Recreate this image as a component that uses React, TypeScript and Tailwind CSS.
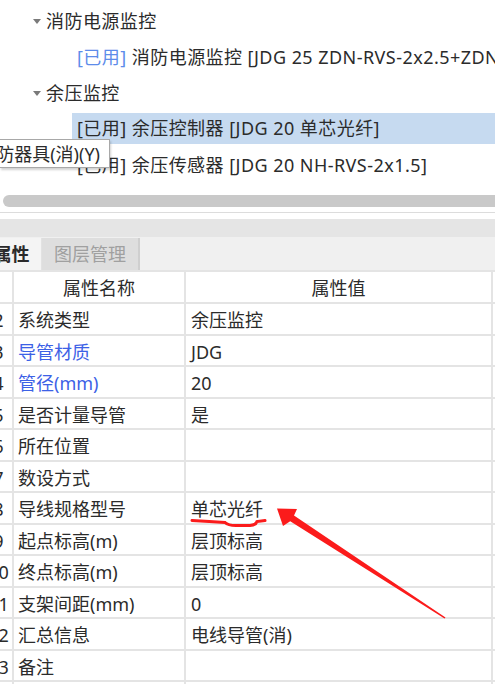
import React from "react";

const font = { fontFamily: '"Noto Sans", "Noto Sans CJK SC", sans-serif' };

type Row = { no: string; name: string; value: string; blue?: boolean };

const rows: Row[] = [
  { no: "2", name: "系统类型", value: "余压监控" },
  { no: "3", name: "导管材质", value: "JDG", blue: true },
  { no: "4", name: "管径(mm)", value: "20", blue: true },
  { no: "5", name: "是否计量导管", value: "是" },
  { no: "6", name: "所在位置", value: "" },
  { no: "7", name: "数设方式", value: "" },
  { no: "8", name: "导线规格型号", value: "单芯光纤" },
  { no: "9", name: "起点标高(m)", value: "层顶标高" },
  { no: "10", name: "终点标高(m)", value: "层顶标高" },
  { no: "11", name: "支架间距(mm)", value: "0" },
  { no: "12", name: "汇总信息", value: "电线导管(消)" },
  { no: "13", name: "备注", value: "" },
  { no: "14", name: "", value: "" },
];

function Caret() {
  return (
    <svg width="8" height="5" viewBox="0 0 8 5" className="shrink-0">
      <path d="M0 0 L8 0 L4 5 Z" fill="#7a7a7a" />
    </svg>
  );
}

export default function App() {
  return (
    <div
      className="relative w-[495px] h-[684px] overflow-hidden bg-white text-[18px] text-[#2b2b2b]"
      style={font}
    >
      {/* Tree */}
      <div className="h-[195px] pt-[3px] whitespace-nowrap leading-none tracking-[0.45px]">
        <div className="h-[36px] flex items-center pl-[33px] gap-[5px]">
          <Caret />
          <span>消防电源监控</span>
        </div>
        <div className="h-[36px] flex items-center pl-[77px]">
          <span className="text-[#5d8cea]">[已用]</span>
          <span>&nbsp;消防电源监控 [JDG 25 ZDN-RVS-2x2.5+ZDN-RVS-2x1.5]</span>
        </div>
        <div className="h-[36px] flex items-center pl-[33px] gap-[5px]">
          <Caret />
          <span>余压监控</span>
        </div>
        <div className="h-[36px] flex items-center">
          <div className="ml-[72px] h-[31px] mt-[-2px] flex-1 flex items-center pl-[5px] bg-[#c6daf0]">
            [已用] 余压控制器 [JDG 20 单芯光纤]
          </div>
        </div>
        <div className="h-[36px] flex items-center pl-[77px]">
          [已用] 余压传感器 [JDG 20 NH-RVS-2x1.5]
        </div>
      </div>

      {/* Horizontal scrollbar */}
      <div className="h-[12px] ml-[3px] w-[520px] rounded-full bg-[#c9c9c9]" />
      <div className="h-[5px]" />
      <div className="h-px bg-[#dcdcdc]" />
      <div className="h-[6px]" />
      <div className="h-[18px] bg-[#e5e5e5]" />

      {/* Tabs */}
      <div className="h-[33px] bg-[#f0f0f0] flex items-end leading-none">
        <div className="ml-[-18px] w-[60px] h-[32px] flex items-center justify-center font-bold text-[#2a2a2a] bg-[#f4f4f4] border-r border-[#e2e2e2]">
          属性
        </div>
        <div className="w-[98px] h-[32px] flex items-center justify-center text-[#a0a0a0] bg-[#dedede] border-r-2 border-[#cfcfcf]">
          图层管理
        </div>
      </div>

      {/* Property table */}
      <div className="ml-[-15px] w-[510px] border-t-2 border-[#e4e4e4] leading-none whitespace-nowrap">
        <div className="h-[32px] flex border-b-2 border-[#e4e4e4]">
          <div className="w-[29px] border-r-2 border-[#e4e4e4]" />
          <div className="w-[172px] border-r-2 border-[#e4e4e4] flex items-center justify-center pt-[2px]">
            属性名称
          </div>
          <div className="w-[307px] border-r-2 border-[#e4e4e4] flex items-center justify-center pt-[2px]">
            属性值
          </div>
        </div>
        {rows.map((r) => (
          <div key={r.no} className="h-[31.5px] flex border-b-2 border-[#e4e4e4]">
            <div className="w-[29px] border-r-2 border-[#e4e4e4] flex items-center justify-center pt-[3px]">
              {r.no}
            </div>
            <div
              className={`w-[172px] border-r-2 border-[#e4e4e4] flex items-center pl-[4px] pt-[3px] ${
                r.blue ? "text-[#3c61e6]" : ""
              }`}
            >
              {r.name}
            </div>
            <div className="w-[307px] border-r-2 border-[#e4e4e4] flex items-center pl-[5px] pt-[3px]">
              {r.value}
            </div>
          </div>
        ))}
      </div>

      {/* Tooltip */}
      <div className="absolute left-0 top-[139px] w-[110px] h-[29px] bg-white border border-l-0 border-[#a8a8a8] shadow-[1px_2px_2px_rgba(0,0,0,0.18)] overflow-hidden flex items-center justify-end pr-[9px] whitespace-nowrap leading-none text-[#2b2b2b]">
        <span className="shrink-0">消防器具(消)(Y)</span>
      </div>

      {/* Annotation */}
      <svg className="absolute left-0 top-0 pointer-events-none" width="495" height="684">
        <path
          d="M192 520.5 Q210 521.5 225 522.5 Q228 525.5 236 525.5 L250 525.5 Q256 525 257 521.5 L265 520.5"
          fill="none"
          stroke="#fb1b1b"
          strokeWidth="3"
          strokeLinecap="round"
        />
        <polygon
          points="277,508.5 297,509 294,515.4 445.5,617.5 444.5,618.5 290.2,521.2 283,526"
          fill="#fb1b1b"
        />
      </svg>
    </div>
  );
}
